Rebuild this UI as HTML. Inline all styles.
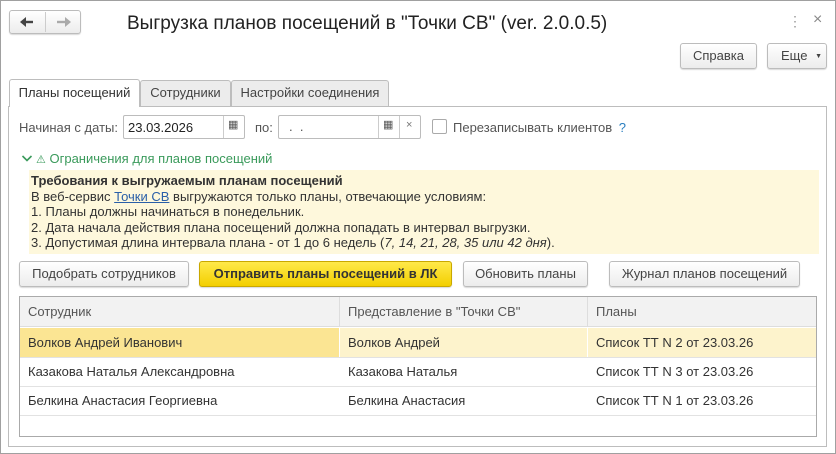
<!DOCTYPE html>
<html><head><meta charset="utf-8"><style>
*{box-sizing:border-box;margin:0;padding:0}
body{width:836px;height:454px;background:#fff;font-family:"Liberation Sans",Arial,sans-serif;font-size:13px;color:#333;position:relative;overflow:hidden}
.a{position:absolute}
.outer{left:0;top:0;width:836px;height:454px;border:1px solid #a0a0a0}
.btn{position:absolute;border:1px solid #bcbcbc;border-radius:3px;background:linear-gradient(#fff,#ececec);box-shadow:0 1px 1px rgba(0,0,0,.15);text-align:center;color:#444;line-height:24px}
.tab{position:absolute;top:80px;height:26px;border:1px solid #bdbdbd;border-bottom:none;background:#ececec;color:#444;line-height:24px;text-align:center;border-radius:3px 3px 0 0}
.inp{position:absolute;border:1px solid #bcbcbc;height:24px;border-radius:2px;background:#fff}
.cell{position:absolute;line-height:29px;padding-left:9px;color:#333;white-space:nowrap}
</style></head><body>
<div class="a outer"></div>
<div class="btn" style="left:9px;top:10px;width:72px;height:24px"></div>
<div class="a" style="left:45px;top:12px;width:1px;height:20px;background:#ccc"></div>
<svg class="a" style="left:18px;top:15px" width="60" height="14"><path d="M4 7h11" stroke="#444" stroke-width="2.4"/><path d="M2 7l6-5v10z" fill="#444"/><path d="M39 7h11" stroke="#aaa" stroke-width="2.4"/><path d="M53 7l-6-5v10z" fill="#aaa"/></svg>
<div class="a" style="left:127px;top:13px;font-size:19px;color:#222;white-space:nowrap">Выгрузка планов посещений в "Точки СВ" (ver. 2.0.0.5)</div>
<div class="a" style="left:788px;top:13px;color:#999;font-size:14px">⋮</div>
<div class="a" style="left:813px;top:11px;color:#888;font-size:16px">×</div>
<div class="btn" style="left:680px;top:43px;width:77px;height:26px">Справка</div>
<div class="btn" style="left:767px;top:43px;width:60px;height:26px;text-align:left;padding-left:13px">Еще <span style="font-size:7px;position:relative;top:-2px;margin-left:4px">▼</span></div>

<div class="a" style="left:8px;top:106px;width:819px;height:341px;border:1px solid #bdbdbd"></div>
<div class="tab" style="left:9px;top:79px;width:131px;height:28px;background:#fff;color:#333;line-height:26px">Планы посещений</div>
<div class="tab" style="left:140px;width:91px">Сотрудники</div>
<div class="tab" style="left:231px;width:158px">Настройки соединения</div>

<div class="a" style="left:19px;top:120px;color:#555">Начиная с даты:</div>
<div class="inp" style="left:123px;top:115px;width:122px"><span style="position:absolute;left:4px;top:4px;color:#222">23.03.2026</span><div style="position:absolute;left:99px;top:0;width:1px;height:22px;background:#ccc"></div><span style="position:absolute;left:104px;top:2px;font-size:11px;color:#555">▦</span></div>
<div class="a" style="left:255px;top:120px;color:#555">по:</div>
<div class="inp" style="left:278px;top:115px;width:143px"><span style="position:absolute;left:10px;top:3px;color:#555">.&nbsp;&nbsp;.</span><div style="position:absolute;left:99px;top:0;width:1px;height:22px;background:#ccc"></div><span style="position:absolute;left:104px;top:2px;font-size:11px;color:#555">▦</span><div style="position:absolute;left:120px;top:0;width:1px;height:22px;background:#ccc"></div><span style="position:absolute;left:127px;top:3px;font-size:11px;color:#777">×</span></div>
<div class="a" style="left:432px;top:119px;width:15px;height:15px;border:1px solid #aaa;border-radius:2px"></div>
<div class="a" style="left:453px;top:120px;color:#555">Перезаписывать клиентов <span style="color:#2a7fc0;margin-left:3px">?</span></div>

<div class="a" style="left:21px;top:151px;color:#3a9a5b;white-space:nowrap"><svg width="12" height="10" style="margin-right:3px"><path d="M1.5 3l4.5 4.5 4.5-4.5" stroke="#3a9a5b" stroke-width="1.6" fill="none"/></svg><span style="font-size:11px">⚠</span> Ограничения для планов посещений</div>
<div class="a" style="left:29px;top:170px;width:790px;height:84px;background:#fef8dc;padding:3px 0 0 2px;line-height:15.5px;color:#333;white-space:nowrap">
<b style="color:#333">Требования к выгружаемым планам посещений</b><br>
В веб-сервис <span style="color:#2a5fa8;text-decoration:underline">Точки СВ</span> выгружаются только планы, отвечающие условиям:<br>
1. Планы должны начинаться в понедельник.<br>
2. Дата начала действия плана посещений должна попадать в интервал выгрузки.<br>
3. Допустимая длина интервала плана - от 1 до 6 недель (<i>7, 14, 21, 28, 35 или 42 дня</i>).</div>

<div class="btn" style="left:19px;top:261px;width:170px;height:26px">Подобрать сотрудников</div>
<div class="btn" style="left:199px;top:261px;width:253px;height:26px;background:linear-gradient(#ffe94a,#f3cf00);border-color:#c9a800;color:#333;font-weight:bold">Отправить планы посещений в ЛК</div>
<div class="btn" style="left:463px;top:261px;width:125px;height:26px">Обновить планы</div>
<div class="btn" style="left:609px;top:261px;width:191px;height:26px">Журнал планов посещений</div>

<div class="a" style="left:19px;top:296px;width:798px;height:141px;border:1px solid #aaa"></div>
<div class="a" style="left:20px;top:297px;width:796px;height:30px;background:#f2f2f2;border-bottom:1px solid #ddd"></div>
<div class="a" style="left:20px;top:328px;width:320px;height:29px;background:#fbe593"></div>
<div class="a" style="left:340px;top:328px;width:476px;height:29px;background:#fdf3cc"></div>
<div class="a" style="left:339px;top:297px;width:1px;height:30px;background:#ddd"></div>
<div class="a" style="left:587px;top:297px;width:1px;height:30px;background:#ddd"></div>
<div class="a" style="left:339px;top:328px;width:1px;height:29px;background:#fff"></div>
<div class="a" style="left:587px;top:328px;width:1px;height:29px;background:#fff"></div>
<div class="a" style="left:20px;top:357px;width:796px;height:1px;background:#e2e2e2"></div>
<div class="a" style="left:20px;top:386px;width:796px;height:1px;background:#e2e2e2"></div>
<div class="a" style="left:20px;top:415px;width:796px;height:1px;background:#e2e2e2"></div>
<div class="cell" style="left:19px;top:297px;color:#555">Сотрудник</div>
<div class="cell" style="left:339px;top:297px;color:#555">Представление в "Точки СВ"</div>
<div class="cell" style="left:587px;top:297px;color:#555">Планы</div>
<div class="cell" style="left:19px;top:328px">Волков Андрей Иванович</div>
<div class="cell" style="left:339px;top:328px">Волков Андрей</div>
<div class="cell" style="left:587px;top:328px">Список ТТ N 2 от 23.03.26</div>
<div class="cell" style="left:19px;top:357px">Казакова Наталья Александровна</div>
<div class="cell" style="left:339px;top:357px">Казакова Наталья</div>
<div class="cell" style="left:587px;top:357px">Список ТТ N 3 от 23.03.26</div>
<div class="cell" style="left:19px;top:386px">Белкина Анастасия Георгиевна</div>
<div class="cell" style="left:339px;top:386px">Белкина Анастасия</div>
<div class="cell" style="left:587px;top:386px">Список ТТ N 1 от 23.03.26</div>
</body></html>
